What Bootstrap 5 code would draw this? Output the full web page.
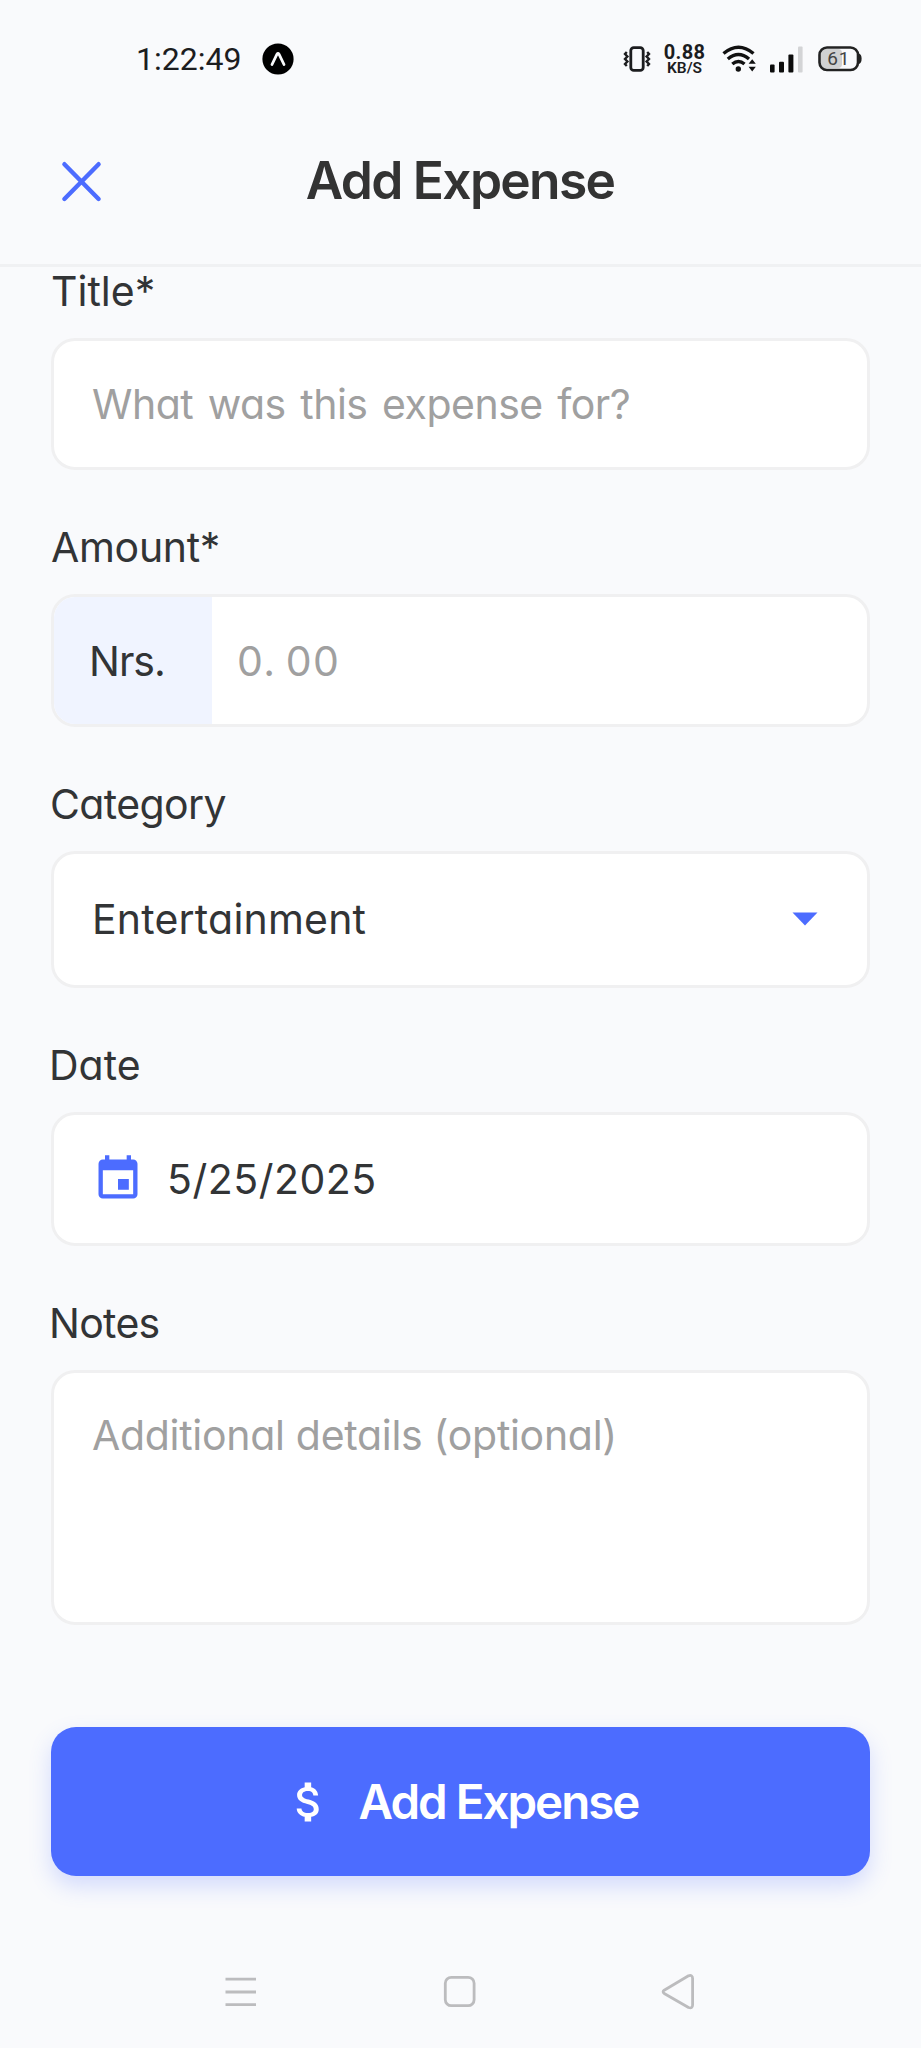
<!DOCTYPE html>
<html lang="en">
<head>
<meta charset="utf-8">
<meta name="viewport" content="width=device-width, initial-scale=1">
<title>Add Expense</title>
<link rel="stylesheet" href="https://cdn.jsdelivr.net/npm/bootstrap@5.3.0/dist/css/bootstrap.min.css">
<style>
  :root { --accent: #4c6cff; --ink: #323436; --line: #f0f0f1; --hint: #a0a0a0; }
  body { background: #f9fafc; color: var(--ink); font-family: Inter, Roboto, sans-serif; font-feature-settings: "cv11" 1, "calt" 0; width: 921px; height: 2048px; overflow: hidden; }
  svg { display: block; flex: none; }

  .status-bar { height: 118px; padding: 0 59px 1px 136px; color: #1c1d1f; }
  .clock { font: 400 32px/1 Roboto, sans-serif; }
  .app-dot { margin-left: 21px; }
  .speed { font: 700 20px/16px Roboto, sans-serif; width: 43px; margin: 3px 16px 0 12px; letter-spacing: .3px; }
  .speed small { font-size: 15.5px; line-height: 16px; letter-spacing: 0; display: block; font-weight: 600; }
  .signal { margin-left: 13px; }
  .battery { margin-left: 14px; }

  .app-header { height: 149px; border-bottom: 3px solid #f0f1f3; padding: 0 61px 23px 60px; display: grid; grid-template-columns: 42px 1fr 42px; align-items: center; }
  .screen-title { font-size: 51.5px; font-weight: 600; line-height: 60px; color: #333; margin: 0; padding-top: 1px; letter-spacing: -1.7px; }

  main { padding: 0 51px; }
  .field-label { font-size: 41px; line-height: 48px; height: 48px; margin: 0 0 23px; display: block; white-space: nowrap; }
  .field-box { background: #fff; border: 3px solid var(--line); border-radius: 24px; font-size: 41px; line-height: 48px; color: var(--ink); padding: 0 38px; display: flex; align-items: center; white-space: nowrap; overflow: hidden; margin-bottom: 53px; }
  .field-box.h-title { height: 132px; letter-spacing: -.5px; word-spacing: 3.5px; }
  .field-box.h-amount { height: 133px; }
  .field-box.h-category { height: 137px; padding-bottom: 1px; }
  .field-box.h-date { height: 134px; padding-bottom: 1px; }
  .field-box.h-notes { height: 255px; margin-bottom: 102px; padding-top: 38px; align-items: flex-start; letter-spacing: -.3px; }
  .field-box.hint, .hint { color: var(--hint); }
  .prefix { width: 158px; padding-left: 35px; background: #f0f4ff; letter-spacing: -1px; }
  .amount-hint { padding-left: 25px; letter-spacing: 1.5px; }
  .decimals { margin-left: 9px; }

  .submit { height: 149px; border: 0; border-radius: 25px; background: var(--accent); color: #fff; box-shadow: 0 10px 22px rgba(76,108,255,.22); font-size: 47.5px; line-height: 56px; font-weight: 600; letter-spacing: -2px; gap: 24px; padding: 0; }
  .nav-keys { padding: 98px 225px 0 223px; color: #bcbcbe; }
</style>
</head>
<body>
<div class="status-bar d-flex align-items-center">
  <span class="clock">1:22:49</span>
  <svg class="app-dot" width="32" height="32" viewBox="0 0 32 32"><circle cx="16" cy="16" r="15.6" fill="#000"/><path d="M10 21.5 15 11.2q1-1.6 2 0l5 10.3" fill="none" stroke="#f9fafc" stroke-width="2.8" stroke-linecap="round" stroke-linejoin="round"/></svg>
  <svg class="ms-auto" width="28" height="28" viewBox="0 0 28 28" fill="none" stroke="currentColor"><rect x="7.800" y="2.600" width="12.400" height="22.800" rx="3" stroke-width="2.800"/><path d="M3.800 7 2 9l2.400 2.500L2 14l2.400 2.500L2 19l1.800 2M24.200 7 26 9l-2.400 2.500L26 14l-2.400 2.500L26 19l-1.800 2" stroke-width="2.400"/></svg>
  <div class="speed text-center">0.88<small>KB/S</small></div>
  <svg width="35" height="28" viewBox="0 0 35 28" fill="none" stroke="#111" stroke-width="3.4"><path d="M1.500 8.500Q16.500-4 31.500 8.500M5.800 14Q16.500 5 27 14M10.300 19Q16.500 13.800 22.500 19"/><circle cx="16.300" cy="24" r="2.700" fill="#111" stroke="none"/><path d="M26.600 18.800 30.200 14.200 33.800 18.800zM26.600 21.800 30.200 26.400 33.800 21.800z" fill="#111" stroke="none"/></svg>
  <svg class="signal" width="34" height="28" viewBox="0 0 34 28"><g fill="#0c0c0c"><rect x="0" y="19.500" width="4.600" height="8" rx="1"/><rect x="9" y="16.800" width="5" height="10.700" rx="1"/><rect x="18.400" y="9.500" width="5" height="18" rx="1"/></g><rect x="28" y="1.500" width="4.600" height="26" rx="1" fill="#d3d4d6"/></svg>
  <svg class="battery" width="44" height="28" viewBox="0 0 44 28"><rect x="3" y="4" width="21" height="19" rx="4" fill="#d0d1d2"/><rect x="1.500" y="2.500" width="38.500" height="22.500" rx="7.500" fill="none" stroke="#222" stroke-width="2.600"/><path d="M41 8.500q2.600 1 2.600 5.300T41 19z" fill="#222"/><text x="20.800" y="20.300" text-anchor="middle" font-family="Roboto, sans-serif" font-size="19" letter-spacing=".8" fill="#444">61</text></svg>
</div>

<header class="app-header">
  <svg class="mt-1" width="42" height="42" viewBox="0 0 42 42" stroke="#4c6cff" stroke-width="4.400" stroke-linecap="round"><path d="M4.400 3.200 38.600 38M38.600 3.200 4.400 38"/></svg>
  <h1 class="screen-title text-center">Add Expense</h1>
</header>

<main>
  <label class="field-label">Title*</label>
  <div class="form-control field-box h-title hint">What was this expense for?</div>

  <label class="field-label" style="letter-spacing:-.3px">Amount*</label>
  <div class="form-control field-box h-amount p-0 align-items-stretch">
    <span class="prefix d-flex align-items-center">Nrs.</span>
    <span class="hint amount-hint d-flex align-items-center">0.<span class="decimals">00</span></span>
  </div>

  <label class="field-label" style="letter-spacing:-.6px;text-indent:-1px">Category</label>
  <div class="form-control field-box h-category justify-content-between">
    <span style="letter-spacing:.2px">Entertainment</span>
    <svg style="margin-right:11px" width="26" height="14" viewBox="0 0 26 14"><path d="M.500.500h25L13 13.500z" fill="#4c6cff"/></svg>
  </div>

  <label class="field-label" style="text-indent:-2px">Date</label>
  <div class="form-control field-box h-date">
    <svg width="52" height="52" viewBox="0 0 24 24" fill="#4c6cff"><path d="M17 12h-5v5h5v-5zM16 1v2H8V1H6v2H5c-1.110 0-1.990.9-1.990 2L3 19c0 1.100.89 2 2 2h14c1.100 0 2-.9 2-2V5c0-1.100-.9-2-2-2h-1V1h-2zm3 18H5V8h14v11z"/></svg>
    <span style="margin-left:23px;letter-spacing:.5px">5/25/2025</span>
  </div>

  <label class="field-label" style="letter-spacing:-.7px;text-indent:-2px">Notes</label>
  <div class="form-control field-box h-notes hint">Additional details (optional)</div>

  <button class="btn submit w-100 d-flex align-items-center justify-content-center">
    <svg width="52" height="52" viewBox="0 0 24 24" fill="#fff"><path d="M11.800 10.900c-2.270-.59-3-1.200-3-2.150 0-1.090 1.010-1.850 2.700-1.850 1.780 0 2.440.85 2.500 2.100h2.210c-.07-1.720-1.120-3.300-3.210-3.810V3h-3v2.160c-1.940.42-3.500 1.680-3.500 3.610 0 2.310 1.910 3.460 4.700 4.130 2.500.6 3 1.480 3 2.410 0 .69-.49 1.790-2.700 1.790-2.060 0-2.870-.92-2.980-2.100h-2.200c.12 2.190 1.760 3.420 3.680 3.830V21h3v-2.150c1.950-.37 3.500-1.500 3.500-3.550 0-2.840-2.430-3.810-4.700-4.400z"/></svg>
    <span>Add Expense</span>
  </button>
</main>

<div class="nav-keys d-flex justify-content-between">
  <svg width="36" height="36" viewBox="0 0 36 36" stroke="currentColor" stroke-width="2.800"><path d="M2.500 5.200h30.500M2.500 18h30.500M2.500 30.700h30.500"/></svg>
  <svg width="36" height="36" viewBox="0 0 36 36" fill="none" stroke="currentColor" stroke-width="2.800"><rect x="3.300" y="3.300" width="28.800" height="28.400" rx="6"/></svg>
  <svg width="36" height="36" viewBox="0 0 36 36" fill="none" stroke="currentColor" stroke-width="2.800" stroke-linejoin="round"><path d="M4.200 16.200 28.500 1.800Q32.500.500 32.600 4.500V31Q32.500 35 28.500 33.500L4.200 19.500Q2 17.800 4.200 16.200z"/></svg>
</div>
<script src="https://cdn.jsdelivr.net/npm/bootstrap@5.3.0/dist/js/bootstrap.bundle.min.js"></script>
</body>
</html>
